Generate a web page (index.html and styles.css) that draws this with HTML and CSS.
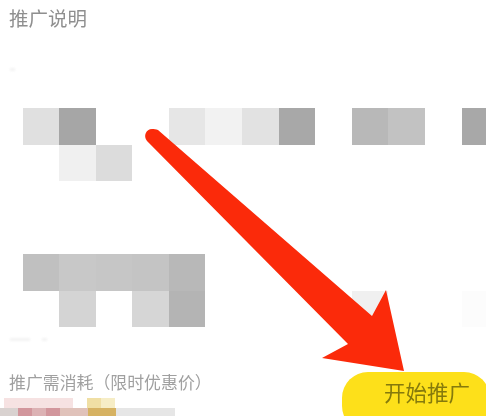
FILE: index.html
```html
<!DOCTYPE html>
<html lang="en">
<head>
    <meta charset="UTF-8">
    <title>推广说明</title>
    <link rel="stylesheet" href="styles.css">
</head>
<body>
    <div class="page">
        <h2 class="title">推广说明</h2>

        <div class="marks marks-top">
            <span class="mark w5"></span>
        </div>

        <div class="mosaic mosaic-top">
            <div class="tile c1 r1 g-e0"></div>
            <div class="tile c2 r1 g-a6"></div>
            <div class="tile c2 r2 g-f0"></div>
            <div class="tile c3 r2 g-dc"></div>
            <div class="tile c5 r1 g-e6"></div>
            <div class="tile c6 r1 g-f2"></div>
            <div class="tile c7 r1 g-e2"></div>
            <div class="tile c8 r1 g-a8"></div>
            <div class="tile c10 r1 g-b8"></div>
            <div class="tile c11 r1 g-c2"></div>
            <div class="tile c13 r1 g-a8"></div>
        </div>

        <div class="mosaic mosaic-bottom">
            <div class="tile c1 r1 g-c0"></div>
            <div class="tile c2 r1 g-c8"></div>
            <div class="tile c3 r1 g-c6"></div>
            <div class="tile c4 r1 g-c4"></div>
            <div class="tile c5 r1 g-b8"></div>
            <div class="tile c2 r2 g-d4"></div>
            <div class="tile c4 r2 g-d6"></div>
            <div class="tile c5 r2 g-b4"></div>
            <div class="tile c10 r2 g-f0"></div>
            <div class="tile c13 r2 g-fc"></div>
        </div>

        <div class="marks marks-bottom">
            <span class="mark w20"></span>
            <span class="mark w5"></span>
        </div>

        <div class="cost-row">
            <h3 class="cost-title">推广需消耗（限时优惠价）</h3>
            <button class="start-btn">开始推广</button>
        </div>

        <div class="price-strip">
            <div class="strip-row">
                <span class="chip w69 ml4 pink-light"></span>
                <span class="chip w14 ml14 gold-light"></span>
                <span class="chip w14 gold-lighter"></span>
            </div>
            <div class="strip-row">
                <span class="chip w18 grey-pink"></span>
                <span class="chip w14 rose"></span>
                <span class="chip w14 rose-light"></span>
                <span class="chip w14 rose"></span>
                <span class="chip w14 rose-pale"></span>
                <span class="chip w14 rose-pale"></span>
                <span class="chip w28 gold"></span>
                <span class="chip w59 grey"></span>
            </div>
        </div>

        <svg class="arrow" viewBox="0 0 486 416" aria-hidden="true">
            <path d="M158 130 L372 316 L386 290 L404 371 L322 358 L348 344 L147 141 C143 136 146 129 152 129 C154 129 156 129 158 130 Z" fill="#fb2a0a"/>
        </svg>
    </div>
</body>
</html>
```

FILE: styles.css
```css
body {
    margin: 0;
    background-color: #fff;
    font-family: "Noto Sans CJK SC", "Noto Sans", sans-serif;
}

.page {
    position: relative;
    width: 486px;
    height: 416px;
    overflow: hidden;
}

.title {
    margin: 0;
    padding: 4px 0 0 9px;
    height: 68px;
    box-sizing: border-box;
    font-size: 19.5px;
    line-height: 28px;
    font-weight: 400;
    color: #8f8f8f;
    filter: blur(0.4px);
}

/* faint leftovers of the blurred-out text */
.marks {
    display: flex;
    height: 3px;
    padding-left: 10px;
    gap: 12px;
    filter: blur(0.8px);
}

.marks-top {
    margin-bottom: 37px;
}

.marks-bottom {
    margin-top: 11px;
}

.mark {
    display: block;
    background-color: #f3f3f3;
}

.w5 { width: 5px; }
.w20 { width: 20px; }

.mosaic {
    display: grid;
    grid-template-columns: repeat(13, 36.6px);
    grid-auto-rows: 36.5px;
    padding-left: 22.5px;
}

.mosaic-top {
    height: 73px;
}

.mosaic-bottom {
    height: 73px;
    margin-top: 73px;
}

.tile {
    filter: blur(0.3px);
}

.c1 { grid-column: 1; }
.c2 { grid-column: 2; }
.c3 { grid-column: 3; }
.c4 { grid-column: 4; }
.c5 { grid-column: 5; }
.c6 { grid-column: 6; }
.c7 { grid-column: 7; }
.c8 { grid-column: 8; }
.c10 { grid-column: 10; }
.c11 { grid-column: 11; }
.c13 { grid-column: 13; }
.r1 { grid-row: 1; }
.r2 { grid-row: 2; }

.g-a6 { background-color: #a6a6a6; }
.g-a8 { background-color: #a8a8a8; }
.g-b4 { background-color: #b4b4b4; }
.g-b8 { background-color: #b8b8b8; }
.g-c0 { background-color: #c0c0c0; }
.g-c2 { background-color: #c2c2c2; }
.g-c4 { background-color: #c4c4c4; }
.g-c6 { background-color: #c6c6c6; }
.g-c8 { background-color: #c8c8c8; }
.g-d4 { background-color: #d4d4d4; }
.g-d6 { background-color: #d6d6d6; }
.g-dc { background-color: #dcdcdc; }
.g-e0 { background-color: #e0e0e0; }
.g-e2 { background-color: #e2e2e2; }
.g-e6 { background-color: #e6e6e6; }
.g-f0 { background-color: #f0f0f0; }
.g-f2 { background-color: #f2f2f2; }
.g-fc { background-color: #fcfcfc; }

.cost-row {
    display: flex;
    justify-content: space-between;
    align-items: flex-start;
    height: 71px;
    margin-top: 30px;
    padding-left: 9px;
}

.cost-title {
    margin: 0;
    font-size: 16.9px;
    line-height: 22px;
    font-weight: 400;
    color: #a0a0a0;
    filter: blur(0.4px);
}

.start-btn {
    width: 148px;
    height: 60px;
    margin-top: 1px;
    margin-right: -4px;
    padding: 0 0 20px 22px;
    border: none;
    border-radius: 26px;
    background-color: #fde01a;
    color: #857a0c;
    font-family: inherit;
    font-size: 21.5px;
    line-height: 30px;
    filter: blur(0.4px);
}

.price-strip {
    position: absolute;
    left: 0;
    top: 398px;
}

.strip-row {
    display: flex;
    height: 10px;
}

.chip {
    display: block;
}

.w14 { width: 14px; }
.w18 { width: 18px; }
.w28 { width: 28px; }
.w59 { width: 59px; }
.w69 { width: 69px; }
.ml4 { margin-left: 4px; }
.ml14 { margin-left: 14px; }

.pink-light { background-color: #f6e2e2; }
.gold-light { background-color: #f0dfa4; }
.gold-lighter { background-color: #f6edc6; }
.grey-pink { background-color: #d9d2d0; }
.rose { background-color: #d2969c; }
.rose-light { background-color: #dcb2b4; }
.rose-pale { background-color: #e0c2ba; }
.gold { background-color: #d6b262; }
.grey { background-color: #e6e6e6; }

.arrow {
    position: absolute;
    left: 0;
    top: 0;
    width: 486px;
    height: 416px;
}
```
